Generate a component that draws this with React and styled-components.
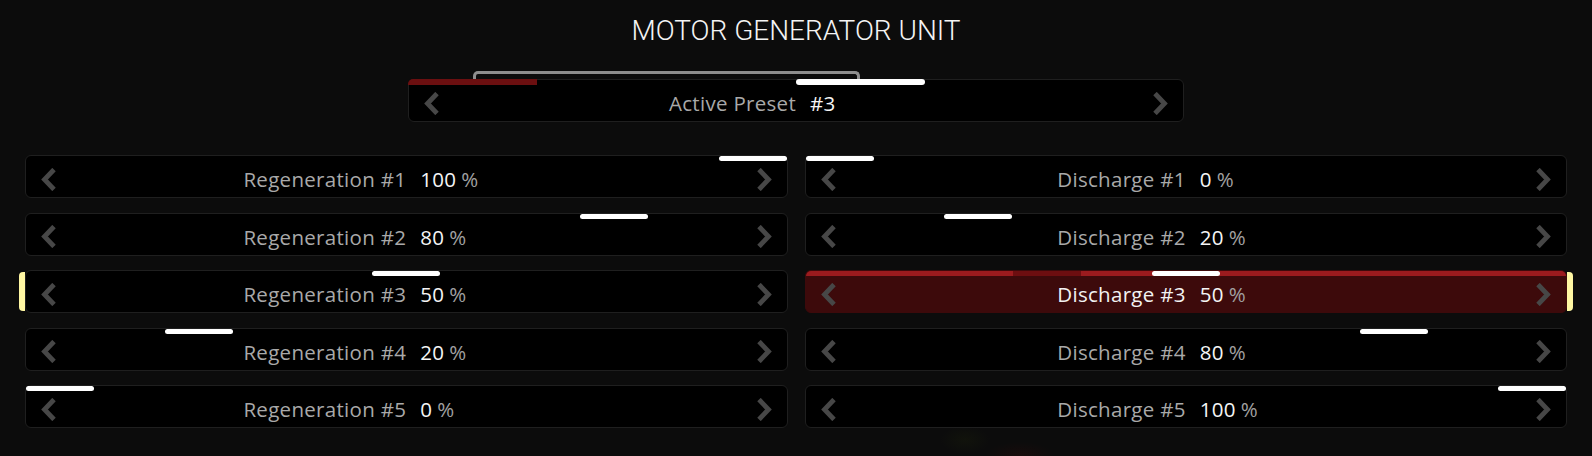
import styled, { createGlobalStyle } from "styled-components";

const GlobalStyle = createGlobalStyle`
  body {
    margin: 0;
    background: #0c0c0c;
  }
`;

const regen = [100, 80, 50, 20, 0];
const discharge = [0, 20, 50, 80, 100];
const presets = ["#6b0f10", null, null, "#ffffff", null, null];
const HANDLE = 68;

function Chevron({ dir }) {
  const pts = dir === "left" ? "14,1.5 4.5,11.5 14,21.5" : "4,1.5 13.5,11.5 4,21.5";
  return (
    <ChevronBox>
      <svg width="18" height="23" viewBox="0 0 18 23">
        <polyline
          points={pts}
          fill="none"
          stroke="#474747"
          strokeWidth="4.8"
          strokeLinejoin="miter"
        />
      </svg>
    </ChevronBox>
  );
}

function SettingRow({ label, value, active, mark, side, track }) {
  return (
    <Card $active={active}>
      <Strip $active={active}>
        {track && <TrackMark style={{ left: `calc(${track} * (100% - ${HANDLE}px))` }} />}
        <Handle style={{ marginLeft: `calc(${value / 100} * (100% - ${HANDLE}px))` }} />
      </Strip>
      {mark && <SideMark $side={side} />}
      <Body>
        <Chevron dir="left" />
        <Label $active={active}>{label}</Label>
        <Value>
          <ValueText>
            {value}
            <Unit>%</Unit>
          </ValueText>
        </Value>
        <Chevron dir="right" />
      </Body>
    </Card>
  );
}

export default function App() {
  return (
    <Page>
      <GlobalStyle />
      <Title>MOTOR GENERATOR UNIT</Title>
      <PresetWrap>
        <Bracket />
        <Card>
          <SegmentStrip>
            {presets.map((c, i) => (
              <Segment key={i} $color={c} $first={i === 0} />
            ))}
          </SegmentStrip>
          <Body>
            <Chevron dir="left" />
            <Label>Active Preset</Label>
            <Value>
              <ValueText>#3</ValueText>
            </Value>
            <Chevron dir="right" />
          </Body>
        </Card>
      </PresetWrap>
      <Grid>
        {regen.map((v, i) => [
          <SettingRow
            key={"r" + i}
            label={`Regeneration #${i + 1}`}
            value={v}
            mark={i === 2}
            side="left"
          />,
          <SettingRow
            key={"d" + i}
            label={`Discharge #${i + 1}`}
            value={discharge[i]}
            active={i === 2}
            mark={i === 2}
            side="right"
            track={i === 2 ? 0.3 : null}
          />,
        ])}
      </Grid>
    </Page>
  );
}

const Page = styled.div`
  height: 456px;
  box-sizing: border-box;
  padding: 17px 25px 0;
  font-family: "Open Sans", sans-serif;
  background:
    radial-gradient(ellipse 25px 14px at 965px 440px, rgba(40, 50, 10, 0.18), transparent),
    radial-gradient(ellipse 35px 14px at 1020px 456px, rgba(70, 10, 10, 0.2), transparent);
  overflow: hidden;
`;

const Title = styled.h1`
  margin: 0;
  font-family: Roboto, sans-serif;
  font-weight: 300;
  font-size: 28px;
  line-height: 28px;
  color: #f4f4f4;
  text-align: center;
`;

const PresetWrap = styled.div`
  position: relative;
  width: 776px;
  margin: 34px auto 0;
`;

const Bracket = styled.div`
  position: absolute;
  top: -8px;
  left: 65px;
  width: 387px;
  height: 10px;
  box-sizing: border-box;
  border: 3px solid #8e8e8e;
  border-bottom: none;
  border-radius: 5px 5px 0 0;
`;

const Grid = styled.div`
  display: grid;
  grid-template-columns: 1fr 1fr;
  grid-auto-rows: 43px;
  column-gap: 17px;
  row-gap: 14.6px;
  margin-top: 33px;
`;

const Card = styled.div`
  position: relative;
  display: flex;
  flex-direction: column;
  height: 43px;
  box-sizing: border-box;
  border: 1px solid ${(p) => (p.$active ? "#3d0a0b" : "#1f1f1f")};
  border-radius: 6px;
  background: ${(p) => (p.$active ? "#3d0a0b" : "#000")};
`;

const Strip = styled.div`
  position: relative;
  display: flex;
  height: 5px;
  flex-shrink: 0;
  background: ${(p) => (p.$active ? "#9b1b1e" : "transparent")};
  border-radius: 5px 5px 0 0;
`;

const SegmentStrip = styled.div`
  display: grid;
  grid-template-columns: repeat(6, 1fr);
  height: 6px;
  margin: -1px -1px 0;
  flex-shrink: 0;
`;

const Segment = styled.div`
  background: ${(p) => p.$color || "transparent"};
  border-radius: ${(p) => (p.$first ? "5px 0 0 0" : "3px")};
`;

const TrackMark = styled.div`
  position: absolute;
  top: 0;
  bottom: 0;
  width: ${HANDLE}px;
  background: #6d0e10;
`;

const Handle = styled.div`
  position: relative;
  width: ${HANDLE}px;
  height: 100%;
  border-radius: 3px;
  background: #ffffff;
`;

const SideMark = styled.div`
  position: absolute;
  top: 1px;
  bottom: 1px;
  width: 6px;
  background: #fff7a3;
  ${(p) =>
    p.$side === "left"
      ? "left: -7px; border-radius: 4px 0 0 4px;"
      : "right: -7px; border-radius: 0 4px 4px 0;"}
`;

const Body = styled.div`
  flex: 1;
  display: flex;
  align-items: center;
`;

const ChevronBox = styled.div`
  display: flex;
  width: 18px;
  margin: 0 14px;
  flex-shrink: 0;
`;

const Label = styled.div`
  flex: 1 1 0;
  text-align: right;
  font-size: 20.5px;
  letter-spacing: 0.3px;
  color: ${(p) => (p.$active ? "#f2f2f2" : "#a9a9a9")};
  white-space: nowrap;
`;

const Value = styled.div`
  flex: 1 1 0;
  font-size: 20.5px;
  letter-spacing: 0.3px;
  color: #f5f5f5;
  white-space: nowrap;
`;

const ValueText = styled.span`
  padding-left: 14px;
`;

const Unit = styled.span`
  margin-left: 5px;
  color: #a0a0a0;
`;
